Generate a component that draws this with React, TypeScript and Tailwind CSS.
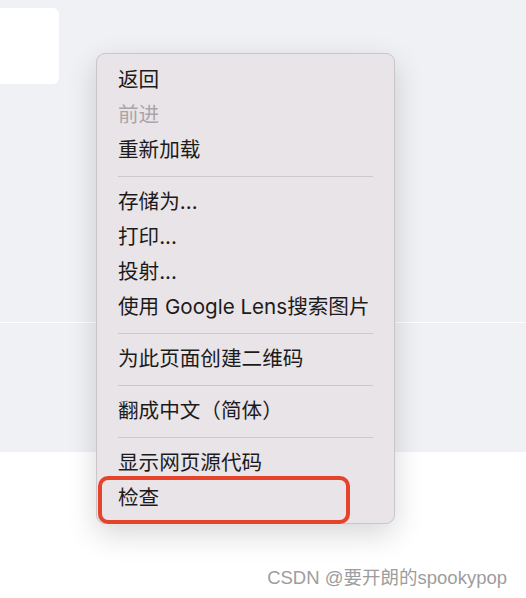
type Item = { label: string; disabled?: boolean } | 'sep';

const items: Item[] = [
  { label: '返回' },
  { label: '前进', disabled: true },
  { label: '重新加载' },
  'sep',
  { label: '存储为...' },
  { label: '打印...' },
  { label: '投射...' },
  { label: '使用 Google Lens搜索图片' },
  'sep',
  { label: '为此页面创建二维码' },
  'sep',
  { label: '翻成中文（简体）' },
  'sep',
  { label: '显示网页源代码' },
  { label: '检查' },
];

function ContextMenu() {
  return (
    <div className="absolute left-[96px] top-[53px] w-[299px] rounded-[9px] border border-[#c9c5c8] bg-[#e9e4e7] pt-[9px] pb-[7px] shadow-[0_10px_30px_rgba(0,0,0,0.16)]">
      {items.map((item, i) =>
        item === 'sep' ? (
          <div key={i} className="flex h-[17px] items-center px-[21px]">
            <div className="h-px w-full bg-[#cdc8cb]" />
          </div>
        ) : (
          <div
            key={i}
            className={`flex h-[35px] items-center px-[21px] text-[20.6px] leading-none ${
              item.disabled ? 'text-[#a9a5a8]' : 'text-[#1c1b1c]'
            }`}
          >
            {item.label}
          </div>
        )
      )}
    </div>
  );
}

export default function App() {
  return (
    <div
      className="relative h-[598px] w-[526px] overflow-hidden bg-white"
      style={{ fontFamily: 'Inter, "Noto Sans CJK SC", sans-serif' }}
    >
      {/* page behind the menu */}
      <div className="flex h-[452px] flex-col bg-[#f0f1f5]">
        <div className="h-[322px] pt-2">
          <div className="h-[76px] w-[59px] rounded-r-[6px] bg-white" />
        </div>
        <div className="h-px bg-white" />
        <div className="flex-1" />
      </div>

      <ContextMenu />

      {/* annotation */}
      <div className="absolute left-[98px] top-[476px] h-[48px] w-[252px] rounded-[10px] border-4 border-[#e5432b]" />

      <div
        className="absolute right-[19px] top-[569px] text-[18.5px] leading-none text-[#9d9d9d] [text-shadow:0_0_2px_#fff]"
        style={{ fontFamily: '"Liberation Sans", "Noto Sans CJK SC", sans-serif' }}
      >
        CSDN @要开朗的spookypop
      </div>
    </div>
  );
}
